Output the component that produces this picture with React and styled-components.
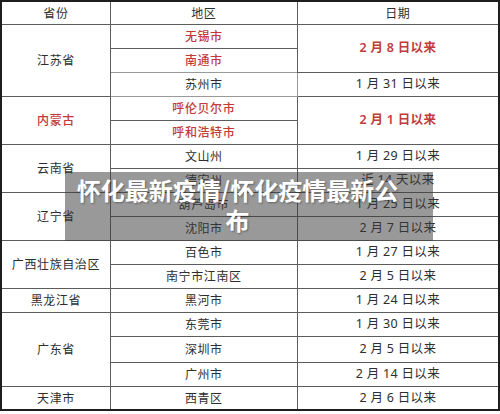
import React from 'react';
import styled, { createGlobalStyle } from 'styled-components';

const GlobalStyle = createGlobalStyle`
  html, body {
    margin: 0;
    padding: 0;
    background: #fff;
  }
`;

// Wrapper for the table and its title banner
const Page = styled.div`
  position: relative;
  width: 500px;
  height: 414px;
  overflow: hidden;
  font-family: "Noto Sans CJK SC", sans-serif;
`;

const Table = styled.table`
  width: 500px;
  border-collapse: collapse;
  table-layout: fixed;
  border: 2px solid #1e1e1e;
`;

const Row = styled.tr`
  height: ${(p) => (p.$head ? '23px' : p.$tall ? '26px' : '24px')};
`;

const Cell = styled.td`
  padding: 0;
  border: 1px solid ${(p) => (p.$soft ? '#9a9a9a' : '#5c5c5c')};
  text-align: center;
  vertical-align: middle;
  font-size: 12px;
  letter-spacing: 0.6px;
  line-height: 1;
  color: ${(p) => (p.$red ? '#c33a3a' : '#2e2e2e')};
  font-weight: ${(p) => (p.$red ? 500 : 400)};
`;

const DateCell = styled(Cell)`
  font-family: "Noto Sans", "Noto Sans CJK SC", sans-serif;
  font-size: 12.5px;
  letter-spacing: 0.3px;
  font-weight: ${(p) => (p.$red ? 600 : 400)};
`;

// Grey title banner laid over the middle of the table
const Banner = styled.div`
  position: absolute;
  left: 65px;
  top: 172px;
  width: 368px;
  box-sizing: border-box;
  padding: 3px 33px 6px 10px;
  background: rgba(60, 60, 60, 0.52);
  color: #fff;
  font-family: "Noto Sans CJK SC", sans-serif;
  font-weight: 700;
  font-size: 24px;
  line-height: 30px;
  text-align: center;
  text-shadow: 1px 1px 2px rgba(0, 0, 0, 0.35);
`;

const groups = [
  {
    province: '江苏省',
    red: false,
    rows: [
      { area: '无锡市', red: true, date: '2 月 8 日以来', dateRed: true, span: 2 },
      { area: '南通市', red: true, soft: true },
      { area: '苏州市', date: '1 月 31 日以来', span: 1, soft: true },
    ],
  },
  {
    province: '内蒙古',
    red: true,
    rows: [
      { area: '呼伦贝尔市', red: true, date: '2 月 1 日以来', dateRed: true, span: 2 },
      { area: '呼和浩特市', red: true },
    ],
  },
  {
    province: '云南省',
    rows: [
      { area: '文山州', date: '1 月 29 日以来', span: 1 },
      { area: '德宏州', date: '近 14 天以来', span: 1 },
    ],
  },
  {
    province: '辽宁省',
    rows: [
      { area: '葫芦岛市', date: '1 月 25 日以来', span: 1 },
      { area: '沈阳市', date: '2 月 7 日以来', span: 1 },
    ],
  },
  {
    province: '广西壮族自治区',
    rows: [
      { area: '百色市', date: '1 月 27 日以来', span: 1 },
      { area: '南宁市江南区', date: '2 月 5 日以来', span: 1 },
    ],
  },
  {
    province: '黑龙江省',
    rows: [{ area: '黑河市', date: '1 月 24 日以来', span: 1 }],
  },
  {
    province: '广东省',
    rows: [
      { area: '东莞市', date: '1 月 30 日以来', span: 1 },
      { area: '深圳市', date: '2 月 5 日以来', span: 1, tall: true },
      { area: '广州市', date: '2 月 14 日以来', span: 1 },
    ],
  },
  {
    province: '天津市',
    rows: [{ area: '西青区', date: '2 月 6 日以来', span: 1 }],
  },
];

export default function App() {
  return (
    <>
      <GlobalStyle />
      <Page>
        <Table>
          <colgroup>
            <col style={{ width: 109 }} />
            <col style={{ width: 186 }} />
            <col style={{ width: 201 }} />
          </colgroup>
          <tbody>
            <Row $head>
              <Cell>省份</Cell>
              <Cell>地区</Cell>
              <Cell>日期</Cell>
            </Row>
            {groups.map((g) =>
              g.rows.map((r, i) => (
                <Row key={g.province + r.area} $tall={r.tall}>
                  {i === 0 && (
                    <Cell rowSpan={g.rows.length} $red={g.red}>
                      {g.province}
                    </Cell>
                  )}
                  <Cell $red={r.red} $soft={r.soft}>{r.area}</Cell>
                  {r.date && (
                    <DateCell rowSpan={r.span} $red={r.dateRed}>
                      {r.date}
                    </DateCell>
                  )}
                </Row>
              ))
            )}
          </tbody>
        </Table>
        <Banner>怀化最新疫情/怀化疫情最新公布</Banner>
      </Page>
    </>
  );
}
